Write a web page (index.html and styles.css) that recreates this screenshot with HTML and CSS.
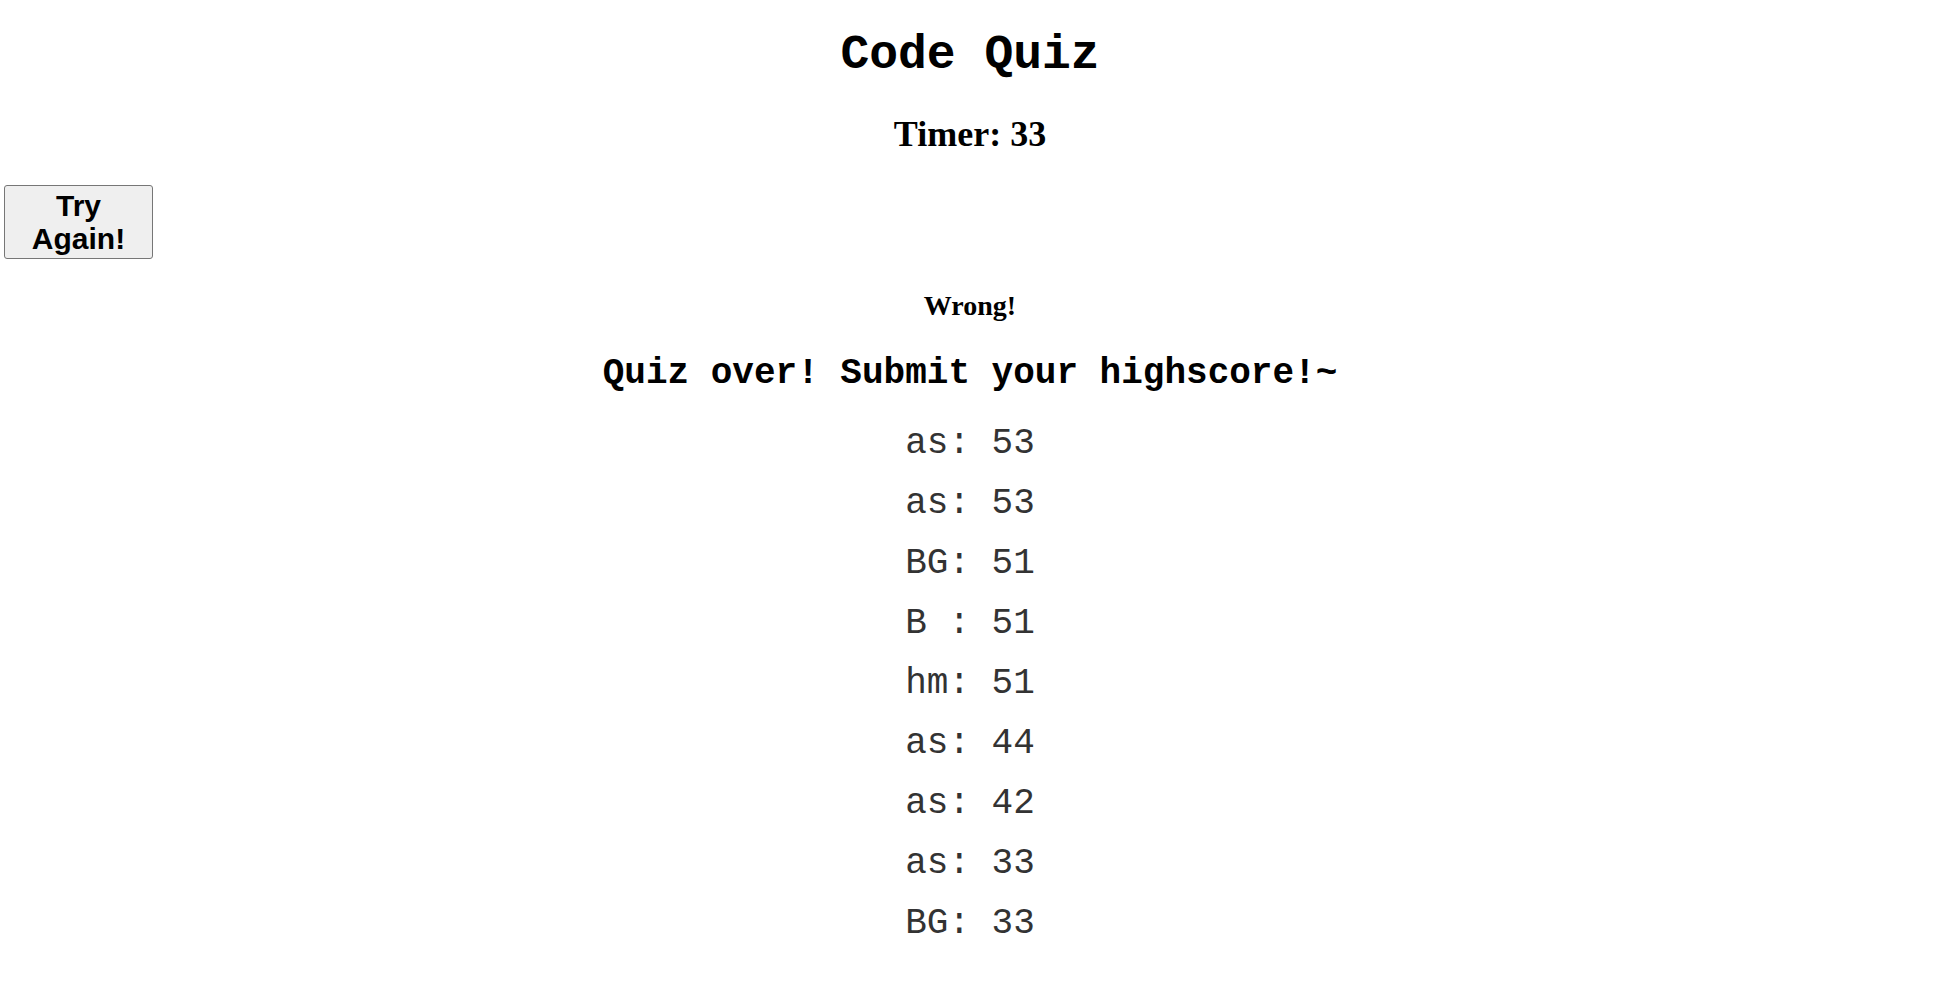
FILE: index.html
```html
<!DOCTYPE html>
<html lang="en">
<head>
<meta charset="utf-8">
<title>Code Quiz</title>
<link rel="stylesheet" href="styles.css">
</head>
<body>
  <header class="header centered">
    <h1 class="title">Code Quiz</h1>
    <h2 class="timer">Timer: 33</h2>
  </header>
  <div class="controls">
    <button class="retry-btn" type="button">Try Again!</button>
  </div>
  <main class="results centered">
    <h3 class="feedback">Wrong!</h3>
    <h2 class="over">Quiz over! Submit your highscore!~</h2>
    <ul class="scores">
      <li class="score">as: 53</li>
      <li class="score">as: 53</li>
      <li class="score">BG: 51</li>
      <li class="score">B : 51</li>
      <li class="score">hm: 51</li>
      <li class="score">as: 44</li>
      <li class="score">as: 42</li>
      <li class="score">as: 33</li>
      <li class="score">BG: 33</li>
    </ul>
  </main>
</body>
</html>
```

FILE: styles.css
```css
html, body {
  margin: 0;
  padding: 0;
  background: #ffffff;
  color: #000000;
}

body {
  font-family: "Liberation Serif", "Times New Roman", serif;
}

.centered {
  text-align: center;
  padding-left: 7px;
}

.header {
  display: flex;
  flex-direction: column;
  align-items: center;
}

.title {
  margin: 28px 0 0;
  font-family: "Liberation Mono", "Courier New", monospace;
  font-weight: bold;
  font-size: 48px;
  line-height: 54px;
}

.timer {
  margin: 32px 0 0;
  font-family: "Liberation Serif", "Times New Roman", serif;
  font-weight: bold;
  font-size: 36px;
  line-height: 41px;
}

.controls {
  display: flex;
  padding-left: 4px;
  margin-top: 30px;
}

.retry-btn {
  box-sizing: border-box;
  width: 149px;
  height: 74px;
  padding: 3px 6px;
  margin: 0;
  background: #efefef;
  border: 1px solid #767676;
  border-radius: 3px;
  font-family: "Liberation Sans", Arial, sans-serif;
  font-weight: bold;
  font-size: 30px;
  line-height: 33px;
  color: #000000;
  text-align: center;
}

.feedback {
  margin: 31px 0 0;
  font-family: "Liberation Serif", "Times New Roman", serif;
  font-weight: bold;
  font-size: 28px;
  line-height: 32px;
}

.over {
  margin: 31px 0 0;
  font-family: "Liberation Mono", "Courier New", monospace;
  font-weight: bold;
  font-size: 36px;
  line-height: 41px;
}

.scores {
  list-style: none;
  margin: 20px 0 0;
  padding: 0;
}

.score {
  font-family: "Liberation Mono", "Courier New", monospace;
  font-size: 36px;
  line-height: 60px;
  color: #333333;
  white-space: pre;
}
```
